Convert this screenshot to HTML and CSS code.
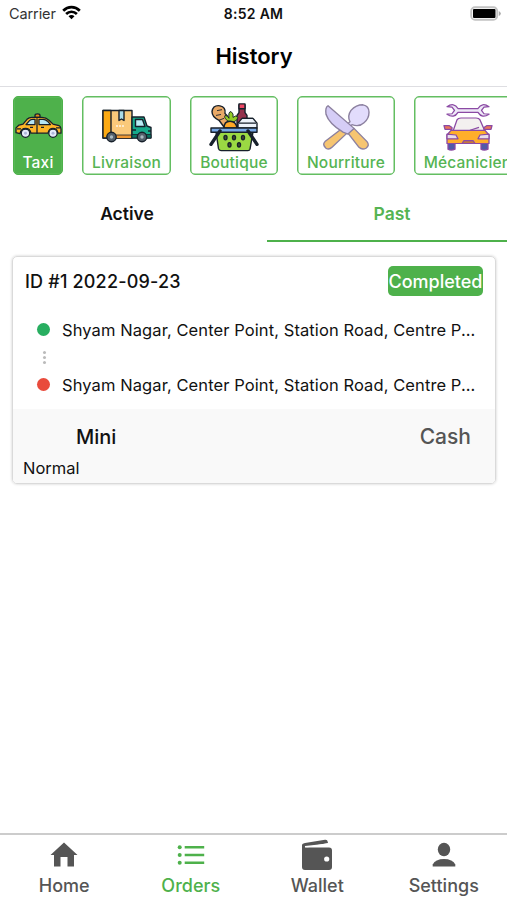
FILE: index.html
```html
<!DOCTYPE html>
<html lang="en">
<head>
<meta charset="utf-8">
<title>History</title>
<link rel="stylesheet" href="styles.css">
</head>
<body>
<div class="screen">
  <div class="status">
    <div class="carrier"><span>Carrier</span>
      <svg width="19" height="15" viewBox="0 0 19 15" fill="none" stroke="#000" stroke-width="2.7"><path d="M1.2 5.7C6 .9 13 .9 17.8 5.7"/><path d="M4.1 9c3.1-3 7.7-3 10.8 0"/><path d="M6.5 11.2c1.8-1.6 4.2-1.6 6 0L9.500 14.300z" fill="#000" stroke="none"/></svg>
    </div>
    <span class="clock">8:52 AM</span>
    <svg class="battery" width="31" height="15" viewBox="0 0 31 15"><rect x="1.200" y="1.200" width="26" height="12.600" rx="3.800" fill="#fff" stroke="#c2c2c2" stroke-width="1.900"/><rect x="3" y="3" width="22.500" height="9" rx="1"/><path d="M28.800 5v5q2-1 2-2.500t-2-2.500z" fill="#aaa"/></svg>
  </div>
  <header class="title">History</header>

  <nav class="categories">
    <div class="chip chip-on taxi">
      <svg width="48" height="50" viewBox="0 0 48 52" stroke="#17202b" stroke-width="1.300" stroke-linejoin="round" preserveAspectRatio="none"><path d="M21 17v-2q0-1.500 2.500-1.500t2.500 1.500v2z" fill="#e58a17"/><path d="M2 33v-5l3-3 4-1 4-5q2-2 5-2h10q4 0 7 3l4 4 6 1.500q2 1 2 4v4h-3q-1-5-5-5t-5 5H17q-1-5-5.500-5T6 34z" fill="#fdb528"/><path d="M12 24.500l3.500-4q1-1.500 3-1.500h2.500v5.500zM25 19h4q2.500 0 4.500 2l3 3.500H25z" fill="#b5e5f5"/><path d="M23 18v16M3 29h4M42 28h4M16 27.500h3M27 27.500h3" fill="none"/><circle cx="11.500" cy="33.500" r="4.200" fill="#e5eafa"/><circle cx="39" cy="33.500" r="4.200" fill="#e5eafa"/><circle cx="11.500" cy="33.500" r="1.500" fill="#aeb5da" stroke="none"/><circle cx="39" cy="33.500" r="1.500" fill="#aeb5da" stroke="none"/></svg>
      <span>Taxi</span>
    </div>
    <div class="chip livraison">
      <svg width="52" height="52" viewBox="0 0 52 52" stroke="#17202b" stroke-width="1.400" stroke-linejoin="round"><path d="M2 9.500h29V37H2z" fill="#fac97a"/><path d="M2 9.500h8V37H2z" fill="#fba914"/><path d="M10 34h21v3.500H10z" fill="#ef9833" stroke-width=".8"/><path d="M18 9.500v10l2.500-1.500 2.500 1.500v-10z" fill="#aadbe9"/><path d="M31 16h12l3 9 4 1.500V37H31z" fill="#17aa8b"/><path d="M34.500 18.500h7l2.500 7h-9.500z" fill="#b9edf5"/><path d="M31 29h4M47 30h3" fill="none"/><path d="M16 24v2m3-2v2m3-2v2" fill="none" stroke="#fff" stroke-width="1.200"/><path d="M31 33.500h19V37H31z" fill="#08735f" stroke-width=".8"/><g fill="#55616c"><circle cx="10.500" cy="36" r="4.700"/><circle cx="41" cy="36" r="4.700"/></g><g fill="#a8b8c0" stroke="none"><circle cx="10.500" cy="36" r="1.700"/><circle cx="41" cy="36" r="1.700"/></g></svg>
      <span>Livraison</span>
    </div>
    <div class="chip boutique">
      <svg width="50" height="52" viewBox="0 0 50 54" stroke="#17202b" stroke-width="1.400" stroke-linejoin="round" preserveAspectRatio="none"><path d="M15 27l-5-7q-7-3-7-9 1-7 8-6 6 1 5 8 5 4 5 12z" fill="#e9a967"/><path d="M8 10l5-1M7 15l5-1M10 20l5-2" fill="none" stroke-width=".9"/><path d="M28 27V15l2-3V4h6v8l2 3v12z" fill="#95334e"/><path d="M30 3h6v5h-6z" fill="#ec4663"/><path d="M21 22q-7-4-5-7 3 0 4 3-1-7 2-7 3 2 2 6 3-3 5 0-1 4-5 5z" fill="#94cc27" stroke-width=".9"/><path d="M15 28q0-7 6-7t7 7z" fill="#ffa827"/><path d="M29 28v-5l4-5h11l4 5v5z" fill="#ecf2fa"/><path d="M33 18h11M30 23h17" fill="none"/><path d="M7 32h37l-3 18q-.5 1.500-2 1.500H12q-2 0-2.500-2z" fill="#9bd943"/><path d="M2 28h46v4.500H2z" fill="#76a8e7"/><path d="M11 31L2 45M39 31l9 14" stroke-width="3.400" stroke-linecap="round"/><g fill="#46512b"><ellipse cx="16.500" cy="38" rx="1.500" ry="2.300"/><ellipse cx="25" cy="38" rx="1.500" ry="2.300"/><ellipse cx="34" cy="38" rx="1.500" ry="2.300"/><ellipse cx="20.500" cy="45.500" rx="1.500" ry="2.300"/><ellipse cx="30" cy="45.500" rx="1.500" ry="2.300"/></g></svg>
      <span>Boutique</span>
    </div>
    <div class="chip nourriture">
      <svg width="50" height="51" viewBox="0 0 50 54" stroke="#8c81a0" stroke-width="1.400" stroke-linejoin="round" preserveAspectRatio="none"><path d="M4 43l17-14 5 5L11 49q-3 3-6 1-4-4-1-7z" fill="#f6c571"/><path d="M21 29l8-7q-3-6 1-12 5-6 12-6 6 1 6 8 0 7-5 11-5 5-12 2l-7 8z" fill="#e2dcfc"/><path d="M27 34l6-5 13 14q3 4-1 7-4 2-7-1z" fill="#f6c571"/><path d="M7 5l26 24-6 6-5-2Q8 24 5 14 4 7 7 5z" fill="#d5cdf6"/></svg>
      <span>Nourriture</span>
    </div>
    <div class="chip mecanicien">
      <svg width="50" height="51" viewBox="0 0 50 54" stroke="#8b4aa4" stroke-width="1.300" stroke-linejoin="round" preserveAspectRatio="none"><path d="M4 6q7-5 11 2h20q4-7 11-2l-5 .5-2.500 3.500 2.500 3.500 5 .5q-7 5-11-2H15q-4 7-11 2l5-.5 2.500-3.500L9 6.500z" fill="#eee9f7"/><path d="M5 43h7v8q-4 2-7 0zM38 43h7v8q-4 2-7 0z" fill="#515aa8"/><path d="M10 32l4-12q1-2 4-2h15q3 0 4 2l5 12z" fill="#f3f0ef"/><path d="M1 26h5l3 2v2H2zM49 26h-5l-3 2v2h7z" fill="#eb7757"/><path d="M8 31h34l4 5v9H4v-9z" fill="#ffae2b"/><path d="M4 35l9 1 2 4H4zM46 35l-9 1-2 4h11z" fill="#e9ddeb"/><path d="M19 45l2-3h9l2 3z" fill="#c6783e"/><path d="M27 31l9-3" fill="none"/></svg>
      <span>Mécanicien</span>
    </div>
  </nav>

  <div class="tabs"><div class="tab">Active</div><div class="tab tab-on">Past</div></div>

  <main>
    <article class="card">
      <div class="card-head"><span class="order-id">ID #1 2022-09-23</span><span class="badge">Completed</span></div>
      <div class="route">
        <div class="stop"><i class="dot"></i><span>Shyam Nagar, Center Point, Station Road, Centre P...</span></div>
        <div class="link"><i></i><i></i><i></i></div>
        <div class="stop"><i class="dot dot-end"></i><span>Shyam Nagar, Center Point, Station Road, Centre P...</span></div>
      </div>
      <div class="card-foot">
        <div class="fare"><span class="vehicle">Mini</span><span class="payment">Cash</span></div>
        <div class="kind">Normal</div>
      </div>
    </article>
  </main>

  <footer class="tabbar">
    <div class="item"><svg width="32" height="32" viewBox="0 0 32 32" fill="currentColor"><path d="M16 3.500L29.500 16H26v11.500h-6.500V18h-7v9.500H6V16H2.500z"/></svg><span>Home</span></div>
    <div class="item item-on"><svg width="32" height="32" viewBox="0 0 32 32" fill="currentColor"><circle cx="4.700" cy="8.300" r="2"/><circle cx="4.700" cy="16" r="2"/><circle cx="4.700" cy="23.700" r="2"/><path d="M9.700 7h19.500v2.600H9.700zM9.700 14.700h19.500v2.600H9.700zM9.700 22.400h19.500V25H9.700z"/></svg><span>Orders</span></div>
    <div class="item"><svg width="32" height="32" viewBox="0 0 32 32" fill="currentColor"><path d="M1 7Q.5 4.500 4 4L24 .8q2.500-.3 2.700 2L27 4 3.500 8.600H28q3 0 3 3V28q0 3-3 3H4q-3 0-3-3z"/><path d="M4 7.800L27 5.300" stroke="#fff" stroke-width="1.500"/><circle cx="25.700" cy="20" r="2.600" fill="#fff"/></svg><span>Wallet</span></div>
    <div class="item"><svg width="32" height="32" viewBox="0 0 32 32" fill="currentColor"><ellipse cx="16" cy="10.500" rx="6.200" ry="6.700"/><path d="M4.700 27.500v-2Q7.500 20 16 20t11.300 5.500v2z"/></svg><span>Settings</span></div>
  </footer>
</div>
</body>
</html>
```
FILE: styles.css
```css
* { box-sizing: border-box; }
body { margin: 0; background: #fff; color: #111; font-family: Inter, sans-serif; }
svg { display: block; flex: none; }
.screen { width: 507px; height: 900px; overflow: hidden; display: flex; flex-direction: column; }

.status { height: 28px; flex: none; display: grid; grid-template-columns: 1fr auto 1fr; align-items: center; padding: 0 6px 0 9px; font-size: 14.500px; line-height: 18px; }
.carrier { display: flex; align-items: center; gap: 6px; color: #333; }
.carrier span { letter-spacing: -.1px; }
.carrier svg { margin-top: -3px; }
.clock { font-weight: 600; font-size: 14px; letter-spacing: .3px; color: #111; margin-left: -3px; }
.battery { justify-self: end; margin-top: -2px; }

.title { height: 59px; flex: none; text-align: center; padding-left: 1px; font-size: 22px; line-height: 56px; font-weight: 600; color: #000; border-bottom: 1px solid #dedee2; }

.categories { display: flex; flex: none; gap: 19px; padding: 9px 0 0 13px; }
.chip { flex: none; height: 79px; border: 1px solid #63be61; box-shadow: inset 0 0 0 .5px #63be61; border-radius: 5px; display: flex; flex-direction: column; align-items: center; justify-content: space-between; padding: 4px 0 2px; color: #55b453; font-size: 15.500px; line-height: 19px; letter-spacing: .2px; font-weight: 500; white-space: nowrap; }
.chip-on { background: #4eb14b; border-color: #4eb14b; color: #fff; }
.taxi { width: 50px; }
.livraison { width: 89px; }
.boutique { width: 88px; }
.nourriture { width: 98px; }
.mecanicien { width: 107px; }

.tabs { flex: none; display: grid; grid-template-columns: 254px 250px; gap: 13px; height: 67px; font-size: 17.500px; font-weight: 600; line-height: 78px; text-align: center; }
.tab { height: 67px; }
.tab-on { color: #55b453; border-bottom: 2px solid #4eb14b; }

main { flex: 1; padding: 14px 11px 0 12px; }
.card { height: 228px; border: 1.500px solid #dadada; border-radius: 5px; box-shadow: 0 0 3px #0003; overflow: hidden; display: flex; flex-direction: column; }
.card-head { display: flex; justify-content: space-between; align-items: center; padding: 9px 12px 0; }
.order-id { font-size: 18px; font-weight: 500; letter-spacing: .18px; }
.badge { width: 95px; height: 30px; border-radius: 5px; background: #4eb14b; color: #fff; font-size: 18px; font-weight: 500; line-height: 31px; display: flex; justify-content: center; }
.route { padding: 22px 18px 0 24px; }
.stop { display: flex; align-items: center; height: 23px; gap: 12px; font-size: 16.500px; letter-spacing: .09px; white-space: nowrap; }
.dot { width: 13px; height: 13px; flex: none; border-radius: 50%; background: #28ae60; }
.dot-end { background: #e94b3c; }
.link { height: 32px; padding-left: 5.500px; display: flex; flex-direction: column; justify-content: center; gap: 2px; }
.link i { width: 3px; height: 3px; border-radius: 50%; background: #bbb; }
.card-foot { margin-top: auto; height: 74px; background: #f9f9f9; padding: 14px 10px 0; }
.fare { display: flex; justify-content: space-between; padding: 0 14px 0 53px; line-height: 28px; }
.vehicle { font-size: 20px; font-weight: 500; }
.payment { font-size: 21px; font-weight: 500; color: #555; }
.kind { margin-top: 6px; font-size: 16.500px; line-height: 22px; }

.tabbar { flex: none; height: 67px; border-top: 2px solid #ccc; display: grid; grid-template-columns: repeat(4, 126.500px); padding-left: 1px; }
.item { display: flex; flex-direction: column; align-items: center; padding-top: 4px; color: #555; font-size: 18px; line-height: 24px; font-weight: 500; gap: 3px; }
.item-on { color: #4eb14b; }
```
